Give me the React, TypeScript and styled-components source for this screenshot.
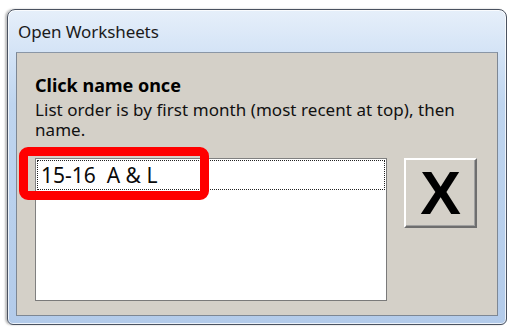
import React from 'react';
import styled, { createGlobalStyle } from 'styled-components';

const GlobalStyle = createGlobalStyle`
  html, body {
    margin: 0;
    padding: 0;
    background: #ffffff;
  }
  body {
    font-family: 'Noto Sans', 'Open Sans', sans-serif;
  }
`;

const Page = styled.div`
  position: relative;
  width: 514px;
  height: 333px;
  padding: 9px 0 0 7px;
  box-sizing: border-box;
`;

const Window = styled.div`
  width: 500px;
  height: 316px;
  box-sizing: border-box;
  border: 1px solid #4a5260;
  border-radius: 8px 8px 6px 6px;
  background: linear-gradient(180deg, #e6effa 0%, #d3e3f6 14%, #bfd5ef 30%, #b3cbea 100%);
  box-shadow: -2px 0 2px rgba(0, 0, 0, 0.25), inset 0 0 0 1px rgba(255, 255, 255, 0.75);
  display: flex;
  flex-direction: column;
  padding: 0 8px 8px 8px;
`;

const TitleBar = styled.div`
  height: 41px;
  display: flex;
  align-items: center;
  padding: 1px 0 0 2px;
  font-size: 17px;
  color: #1b1b1b;
  letter-spacing: -0.1px;
`;

const Client = styled.div`
  flex: 1;
  background: #d4d0c8;
  border: 1px solid #7d8794;
  border-top-color: #8a96a6;
  display: flex;
  flex-direction: column;
  padding: 20px 0 0 18px;
`;

const Heading = styled.div`
  font-size: 18px;
  font-weight: 700;
  color: #000;
  line-height: 24px;
`;

const Note = styled.div`
  font-size: 17px;
  letter-spacing: 0.05px;
  color: #111;
  line-height: 20px;
  width: 440px;
  margin-top: 3px;
`;

const Body = styled.div`
  display: flex;
  gap: 17px;
  margin-top: 18px;
`;

const ListBox = styled.div`
  width: 352px;
  height: 143px;
  box-sizing: border-box;
  background: #ffffff;
  border: 1px solid #808080;
  border-right-color: #7a7a7a;
  border-bottom-color: #7a7a7a;
  padding: 1px;
`;

const Item = styled.div<{ $focused?: boolean }>`
  height: 30px;
  box-sizing: border-box;
  border: 1px dotted ${p => (p.$focused ? '#222' : 'transparent')};
  display: flex;
  align-items: center;
  padding-left: 3px;
  font-size: 21px;
  color: #0a0a0a;
  white-space: pre;
`;

const CloseButton = styled.button`
  width: 73px;
  height: 70px;
  box-sizing: border-box;
  background: #d4d0c8;
  border: 2px solid;
  border-color: #ffffff #6e6e6e #6e6e6e #ffffff;
  box-shadow: inset -1px -1px 0 #a0a0a0;
  display: flex;
  align-items: center;
  justify-content: center;
  padding: 0;
  font-family: 'Liberation Sans', Arial, sans-serif;
  font-weight: 700;
  font-size: 61px;
  color: #000;
  line-height: 1;
`;

const Highlight = styled.div`
  position: absolute;
  left: 19px;
  top: 147px;
  width: 190px;
  height: 53px;
  box-sizing: border-box;
  border: 9px solid #ff0000;
  border-radius: 9px;
  pointer-events: none;
`;

export default function App() {
  return (
    <>
      <GlobalStyle />
      <Page>
        <Window>
          <TitleBar>Open Worksheets</TitleBar>
          <Client>
            <Heading>Click name once</Heading>
            <Note>List order is by first month (most recent at top), then name.</Note>
            <Body>
              <ListBox>
                <Item $focused>{'15-16  A & L'}</Item>
              </ListBox>
              <CloseButton>X</CloseButton>
            </Body>
          </Client>
        </Window>
        <Highlight />
      </Page>
    </>
  );
}
